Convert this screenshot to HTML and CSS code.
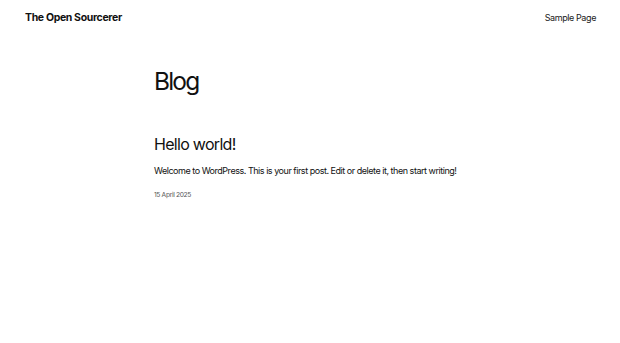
FILE: index.html
```html
<!DOCTYPE html>
<html lang="en">
<head>
<meta charset="utf-8">
<title>The Open Sourcerer</title>
<link rel="stylesheet" href="styles.css">
</head>
<body>
<header class="site-header">
  <a class="site-title" href="#">The Open Sourcerer</a>
  <nav class="site-nav"><a href="#">Sample Page</a></nav>
</header>
<main class="content">
  <h1 class="page-title">Blog</h1>
  <article class="post">
    <h2 class="post-title">Hello world!</h2>
    <p class="post-excerpt">Welcome to WordPress. This is your first post. Edit or delete it, then start writing!</p>
    <div class="post-date">15 April 2025</div>
  </article>
</main>
</body>
</html>
```

FILE: styles.css
```css
html, body {
  margin: 0;
  padding: 0;
  background: #ffffff;
  color: #111111;
  font-family: Inter, "Noto Sans", sans-serif;
}
a { color: inherit; text-decoration: none; }

.site-header {
  display: flex;
  justify-content: space-between;
  align-items: center;
  padding: 10px 24px 0 25px;
  height: 14px;
}
.site-title {
  font-size: 10.5px;
  font-weight: 700;
  letter-spacing: -0.35px;
}
.site-nav {
  font-size: 9px;
  letter-spacing: -0.4px;
  color: #1a1a1a;
}

.content {
  width: 312px;
  margin: 0 auto;
  padding-top: 43px;
}
.page-title {
  margin: 0;
  font-size: 24.5px;
  font-weight: 400;
  letter-spacing: -1.8px;
  line-height: 1.2;
}
.post {
  margin-top: 39px;
}
.post-title {
  margin: 0;
  font-size: 16px;
  font-weight: 400;
  letter-spacing: -0.7px;
  line-height: 1.2;
}
.post-excerpt {
  margin: 10px 0 0;
  font-size: 9px;
  letter-spacing: -0.47px;
  line-height: 1.4;
  white-space: nowrap;
}
.post-date {
  margin-top: 14px;
  font-size: 6.7px;
  color: #555;
  letter-spacing: -0.35px;
}
```
